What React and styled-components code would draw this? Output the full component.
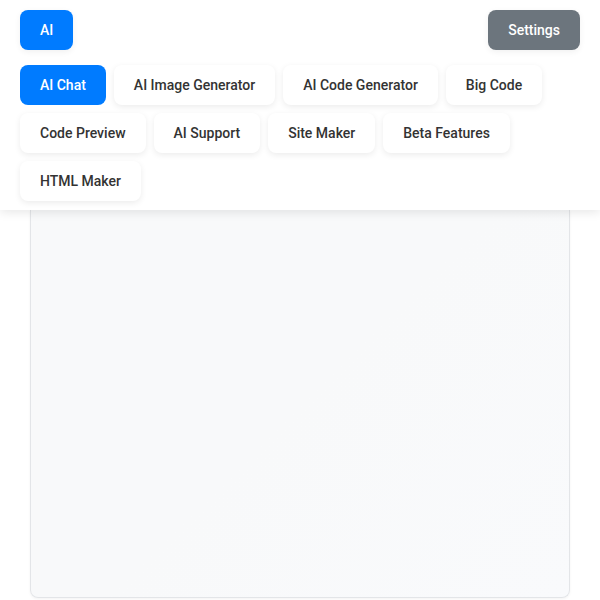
import React, { useState } from "react";
import styled, { createGlobalStyle } from "styled-components";

const GlobalStyle = createGlobalStyle`
  html, body { margin: 0; padding: 0; background: #ffffff; }
  body { font-family: Roboto, "Noto Sans", "Liberation Sans", sans-serif; }
  * { box-sizing: border-box; }
`;

const Page = styled.div`
  width: 600px;
  height: 600px;
  overflow: hidden;
  display: flex;
  flex-direction: column;
`;

const Header = styled.header`
  position: relative;
  z-index: 1;
  background: #ffffff;
  padding: 10px 20px 9px;
  box-shadow: 0 2px 10px rgba(0, 0, 0, 0.1);
  display: flex;
  flex-direction: column;
  gap: 15px;
`;

const TopBar = styled.div`
  display: flex;
  justify-content: space-between;
  align-items: center;
`;

const SolidButton = styled.button`
  height: 40px;
  padding: 0 20px;
  border: none;
  border-radius: 8px;
  background: ${(p) => p.$bg};
  color: #ffffff;
  font-family: inherit;
  font-size: 14px;
  font-weight: 500;
  cursor: pointer;
  box-shadow: 0 2px 6px rgba(0, 0, 0, 0.06);
`;

const Tabs = styled.nav`
  display: flex;
  flex-wrap: wrap;
  gap: 8px;
`;

const Tab = styled.button`
  height: 40px;
  padding: 0 20px;
  border: none;
  border-radius: 8px;
  background: ${(p) => (p.$active ? "#007bff" : "#ffffff")};
  color: ${(p) => (p.$active ? "#ffffff" : "#333333")};
  font-family: inherit;
  font-size: 14px;
  font-weight: 500;
  cursor: pointer;
  box-shadow: ${(p) => (p.$active ? "none" : "0 2px 6px rgba(0, 0, 0, 0.08)")};
`;

const Main = styled.main`
  padding: 0 30px 2px;
  flex: 1;
  display: flex;
`;

const Card = styled.section`
  flex: 1;
  border: 1px solid #e3e5e8;
  border-top: none;
  border-radius: 0 0 8px 8px;
  background: linear-gradient(135deg, #f8f9fa 0%, #f8f9fa 50%, #f9fafc 100%);
  box-shadow: 0 1px 3px rgba(0, 0, 0, 0.05);
`;

const tabs = [
  "AI Chat",
  "AI Image Generator",
  "AI Code Generator",
  "Big Code",
  "Code Preview",
  "AI Support",
  "Site Maker",
  "Beta Features",
  "HTML Maker",
];

export default function App() {
  const [active, setActive] = useState("AI Chat");
  return (
    <>
      <GlobalStyle />
      <Page>
        <Header>
          <TopBar>
            <SolidButton $bg="#007bff">AI</SolidButton>
            <SolidButton $bg="#6c757d">Settings</SolidButton>
          </TopBar>
          <Tabs>
            {tabs.map((t) => (
              <Tab key={t} $active={t === active} onClick={() => setActive(t)}>
                {t}
              </Tab>
            ))}
          </Tabs>
        </Header>
        <Main>
          <Card />
        </Main>
      </Page>
    </>
  );
}
